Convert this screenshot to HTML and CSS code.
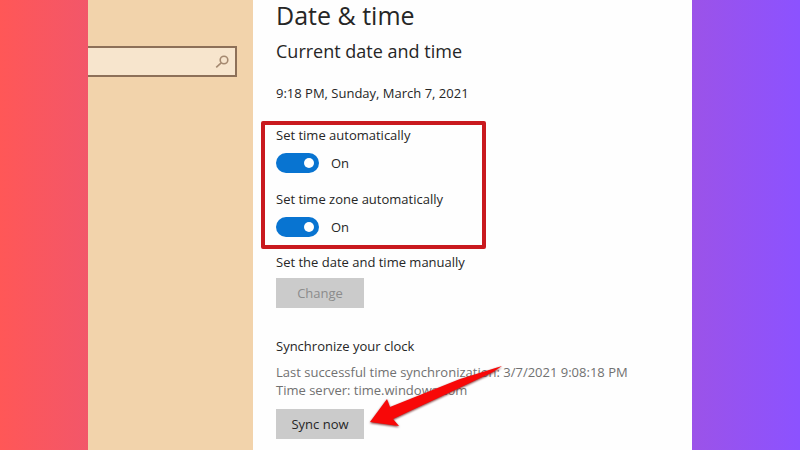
FILE: index.html
```html
<!DOCTYPE html>
<html lang="en">
<head>
<meta charset="utf-8">
<meta name="viewport" content="width=device-width, initial-scale=1">
<title>Date &amp; time</title>
<link rel="stylesheet" href="styles.css">
</head>
<body>
<div class="window">
  <aside class="sidebar">
    <div class="search">
      <input class="search-input" type="search" aria-label="Find a setting">
      <svg class="search-icon" viewBox="0 0 14 14" aria-hidden="true">
        <circle cx="9" cy="5" r="3.8"/>
        <path d="M6.2 7.8L1.2 12.4"/>
      </svg>
    </div>
  </aside>
  <main class="settings">
    <h1 class="title">Date &amp; time</h1>
    <h2 class="heading">Current date and time</h2>
    <p class="now">9:18 PM, Sunday, March 7, 2021</p>

    <section class="highlight">
      <div class="setting">
        <label for="auto-time">Set time automatically</label>
        <div class="switch-row"><input class="switch" id="auto-time" type="checkbox" role="switch" checked><span>On</span></div>
      </div>
      <div class="setting">
        <label for="auto-zone">Set time zone automatically</label>
        <div class="switch-row"><input class="switch" id="auto-zone" type="checkbox" role="switch" checked><span>On</span></div>
      </div>
    </section>

    <section class="manual">
      <h3 class="label">Set the date and time manually</h3>
      <button class="button" type="button" disabled>Change</button>
    </section>

    <section class="sync">
      <h3 class="label">Synchronize your clock</h3>
      <p class="detail">Last successful time synchronization: 3/7/2021 9:08:18 PM</p>
      <p class="detail">Time server: time.windows.com</p>
      <div class="sync-action">
        <button class="button" type="button">Sync now</button>
        <svg class="arrow" viewBox="0 0 136 66" aria-hidden="true">
          <path d="M2 58L19 35L22 43L92 15L134 2L125 8L72 33L44 46L25 55L31 62Z"/>
        </svg>
      </div>
    </section>
  </main>
</div>
</body>
</html>
```
FILE: styles.css
```css
* {
  box-sizing: border-box;
}

body {
  margin: 0;
  min-height: 100vh;
  display: grid;
  grid-template-columns: 11% 1fr 13.5%;
  background: linear-gradient(90deg, #ff5757, #8c52ff);
  color: #262626;
  font: 13px/20px "Open Sans", "Noto Sans", sans-serif;
}

h1,
h2,
h3,
p {
  margin: 0;
  font-weight: 400;
}

.window {
  grid-column: 2;
  display: grid;
  grid-template-columns: 165px 1fr;
  background: #fefefe;
}

.sidebar {
  padding: 46px 16px 0 0;
  background: #f2d3ab;
}

.search {
  display: flex;
  align-items: center;
  height: 31px;
  padding-right: 6px;
  border: 2px solid #8d7058;
  border-left: 0;
  background: #f7e5cd;
}

.search-input {
  flex: 1;
  min-width: 0;
  border: 0;
  outline: 0;
  background: transparent;
  font: inherit;
}

.search-icon {
  width: 14px;
  height: 14px;
  fill: none;
  stroke: #a58970;
  stroke-width: 1.6;
}

.settings {
  padding: 0 23px 8px;
}

.title {
  font-size: 25px;
  line-height: 30px;
}

.heading {
  margin-top: 9px;
  font-size: 18px;
  line-height: 24px;
}

.now {
  margin-top: 20px;
}

.highlight {
  display: grid;
  gap: 16px;
  width: 225px;
  margin: 18px 0 0 -15px;
  padding: 0 0 8px 11px;
  border: 4px solid #c9191e;
  border-radius: 2px;
}

.setting {
  display: grid;
  gap: 8px;
}

.switch-row {
  display: flex;
  align-items: center;
  gap: 12px;
}

.switch {
  appearance: none;
  display: flex;
  align-items: center;
  justify-content: flex-end;
  width: 43px;
  height: 20px;
  margin: 0;
  padding: 0 5px;
  border-radius: 10px;
  background: #0874d1;
}

.switch::before {
  content: "";
  width: 10px;
  height: 10px;
  border-radius: 50%;
  background: #fff;
}

.switch:not(:checked) {
  justify-content: flex-start;
  background: #777;
}

.manual {
  margin-top: 3px;
}

.label {
  font-size: 13px;
}

.button {
  display: block;
  width: 88px;
  height: 30px;
  padding: 0;
  border: 0;
  background: #cbcbcb;
  color: #262626;
  font: inherit;
}

.button:disabled {
  color: #8c8c8c;
}

.manual .button {
  margin-top: 6px;
}

.sync {
  margin-top: 28px;
}

.sync .label {
  margin-bottom: 7px;
}

.detail {
  color: #717171;
  line-height: 18px;
}

.sync-action {
  position: relative;
  width: 88px;
  margin-top: 10px;
}

.arrow {
  position: absolute;
  top: -45px;
  left: 92px;
  width: 136px;
  height: 66px;
  overflow: visible;
  fill: #f80808;
  filter: drop-shadow(0 1px 1px #7c3030);
}
```
